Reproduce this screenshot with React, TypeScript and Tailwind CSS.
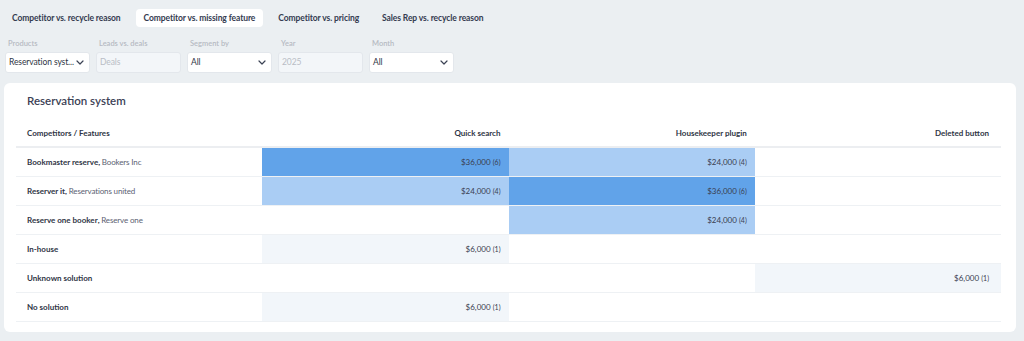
import React from "react";

type Cell = { v: string; n: number; tone: "dark" | "light" | "pale" } | null;

interface Row {
  name: string;
  vendor?: string;
  cells: Cell[];
}

const TABS = [
  "Competitor vs. recycle reason",
  "Competitor vs. missing feature",
  "Competitor vs. pricing",
  "Sales Rep vs. recycle reason",
];

const ROWS: Row[] = [
  {
    name: "Bookmaster reserve",
    vendor: "Bookers Inc",
    cells: [
      { v: "$36,000", n: 6, tone: "dark" },
      { v: "$24,000", n: 4, tone: "light" },
      null,
    ],
  },
  {
    name: "Reserver it",
    vendor: "Reservations united",
    cells: [
      { v: "$24,000", n: 4, tone: "light" },
      { v: "$36,000", n: 6, tone: "dark" },
      null,
    ],
  },
  {
    name: "Reserve one booker",
    vendor: "Reserve one",
    cells: [null, { v: "$24,000", n: 4, tone: "light" }, null],
  },
  { name: "In-house", cells: [{ v: "$6,000", n: 1, tone: "pale" }, null, null] },
  { name: "Unknown solution", cells: [null, null, { v: "$6,000", n: 1, tone: "pale" }] },
  { name: "No solution", cells: [{ v: "$6,000", n: 1, tone: "pale" }, null, null] },
];

const TONE = {
  dark: "bg-[#61a3e9]",
  light: "bg-[#aacdf4]",
  pale: "bg-[#f2f6fa]",
};

function Chevron() {
  return (
    <svg width="8" height="5" viewBox="0 0 8 5" fill="none" className="shrink-0">
      <path d="M1 1l3 3 3-3" stroke="#3b4254" strokeWidth="1.2" strokeLinecap="round" strokeLinejoin="round" />
    </svg>
  );
}

function Filter({
  label,
  value,
  disabled,
}: {
  label: string;
  value: string;
  disabled?: boolean;
}) {
  return (
    <div className="flex w-[85px] flex-col">
      <span className="h-[10px] pl-[3px] text-[7.5px] font-semibold leading-[10px] text-[#b6bac2]">{label}</span>
      <div
        className={
          disabled
            ? "mt-[3px] flex h-[21px] items-center rounded-[3px] border border-[#e3e7ec] bg-[#f3f6f9] px-[3px] text-[8.5px] text-[#b9bdc5]"
            : "mt-[3px] flex h-[21px] items-center justify-between gap-[2px] rounded-[3px] border border-[#e3e7ec] bg-white pl-[3px] pr-[5px] text-[8.5px] text-[#2f3545]"
        }
      >
        <span className="whitespace-nowrap tracking-[-0.1px]">{value}</span>
        {!disabled && <Chevron />}
      </div>
    </div>
  );
}

export default function App() {
  return (
    <div
      className="h-[341px] w-[1024px] overflow-hidden bg-[#ebeff2] px-[4px] pt-[9px]"
      style={{ fontFamily: "Lato, 'Liberation Sans', sans-serif" }}
    >
      <div className="flex h-[18px] gap-[7px]">
        {TABS.map((t, i) => (
          <div
            key={t}
            className={
              "flex items-center rounded-[4px] px-[8px] text-[8.5px] font-bold tracking-[-0.1px] text-[#343b50] " +
              (i === 1 ? "bg-white" : "")
            }
          >
            {t}
          </div>
        ))}
      </div>

      <div className="mt-[12px] flex gap-[6px] pl-[1px]">
        <Filter label="Products" value="Reservation syst..." />
        <Filter label="Leads vs. deals" value="Deals" disabled />
        <Filter label="Segment by" value="All" />
        <Filter label="Year" value="2025" disabled />
        <Filter label="Month" value="All" />
      </div>

      <div className="mt-[10px] h-[249px] w-[1012px] rounded-[6px] bg-white pl-[12px] pr-[15px] pt-[10px]">
        <h2 className="h-[16px] pl-[11px] text-[11.5px] font-semibold leading-[16px] text-[#3b4155]">
          Reservation system
        </h2>
        <table className="mt-[10px] w-full table-fixed border-collapse text-[8px] text-[#2f3545]">
          <thead>
            <tr className="h-[28px] border-b-2 border-[#eceef1]">
              <th className="pl-[11px] text-left font-bold">Competitors / Features</th>
              <th className="pr-[8px] text-right font-bold">Quick search</th>
              <th className="pr-[8px] text-right font-bold">Housekeeper plugin</th>
              <th className="pr-[12px] text-right font-bold">Deleted button</th>
            </tr>
          </thead>
          <tbody>
            {ROWS.map((r) => (
              <tr key={r.name} className="h-[29px] border-b border-[#eef1f4]">
                <td className="pl-[11px]">
                  <span className="font-bold">{r.name}</span>
                  {r.vendor && (
                    <span className="tracking-[-0.15px] text-[#5b6172]">
                      <span className="font-bold text-[#2f3545]">,</span> {r.vendor}
                    </span>
                  )}
                </td>
                {r.cells.map((c, i) => (
                  <td
                    key={i}
                    className={
                      "text-right " +
                      (i === 2 ? "pr-[12px] " : "pr-[8px] ") +
                      (c ? TONE[c.tone] : "")
                    }
                  >
                    {c && (
                      <span className="text-[#3a4050]">
                        {c.v} <span className="text-[7px]">({c.n})</span>
                      </span>
                    )}
                  </td>
                ))}
              </tr>
            ))}
          </tbody>
        </table>
      </div>
    </div>
  );
}
